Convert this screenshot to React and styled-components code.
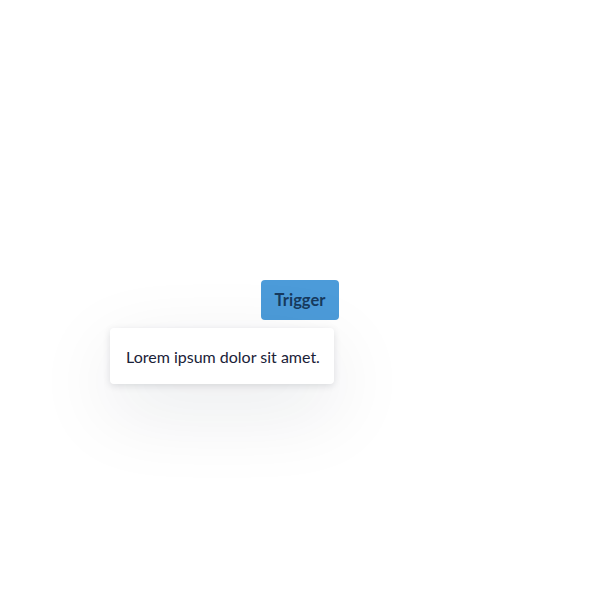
import React from 'react'
import styled, { createGlobalStyle } from 'styled-components'

const Global = createGlobalStyle`
    html, body {
        margin:0;
        padding:0;
        background:#fff;
        font-family:Lato, "Noto Sans", sans-serif;
    }
`
const Page = styled.div`
    width:600px;
    height:600px;
    display:flex;
    align-items:center;
    justify-content:center;
`
const Anchor = styled.div`
    position:relative;
`
const Trigger = styled.button`
    height:40px;
    width:78px;
    padding:0;
    border:none;
    border-radius:4px;
    background-color:#4c9bd9;
    color:#173a5e;
    font-family:Lato, sans-serif;
    font-size:16.5px;
    font-weight:700;
    cursor:pointer;
`
const Popover = styled.div`
    position:absolute;
    top:calc(100% + 8px);
    right:5px;
    width:224px;
    height:56px;
    box-sizing:border-box;
    display:flex;
    align-items:center;
    padding:1px 16px 0;
    background:#fff;
    border-radius:4px;
    color:#1a2238;
    font-size:16px;
    white-space:nowrap;
    box-shadow:0 2px 7px rgba(20, 30, 50, 0.13), 0 25px 80px rgba(20, 30, 50, 0.10);
`

export default function App() {
    return (
        <Page>
            <Global />
            <Anchor>
                <Trigger>Trigger</Trigger>
                <Popover>Lorem ipsum dolor sit amet.</Popover>
            </Anchor>
        </Page>
    )
}
